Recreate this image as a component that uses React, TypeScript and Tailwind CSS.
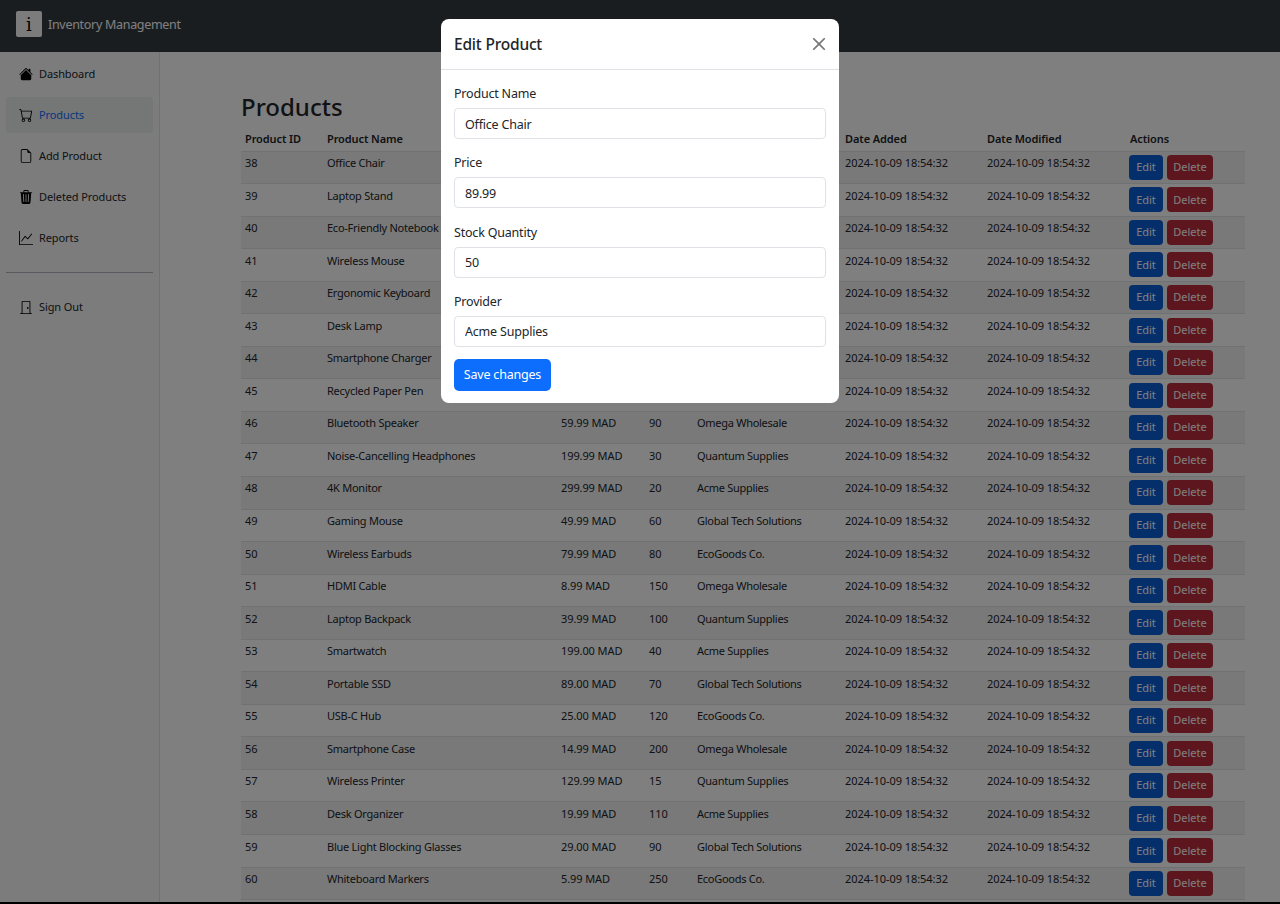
import React from "react";
import { BsHouseFill, BsCart, BsFileEarmark, BsTrash3Fill, BsGraphUp, BsDoorClosed, BsX } from "react-icons/bs";

const rows: [number, string, string, number, string][] = [
  [38, "Office Chair", "89.99", 50, "Acme Supplies"],
  [39, "Laptop Stand", "34.99", 75, "Global Tech Solutions"],
  [40, "Eco-Friendly Notebook", "5.99", 200, "EcoGoods Co."],
  [41, "Wireless Mouse", "19.99", 120, "Omega Wholesale"],
  [42, "Ergonomic Keyboard", "49.99", 60, "Quantum Supplies"],
  [43, "Desk Lamp", "24.99", 80, "Acme Supplies"],
  [44, "Smartphone Charger", "14.99", 150, "Global Tech Solutions"],
  [45, "Recycled Paper Pen", "2.99", 300, "EcoGoods Co."],
  [46, "Bluetooth Speaker", "59.99", 90, "Omega Wholesale"],
  [47, "Noise-Cancelling Headphones", "199.99", 30, "Quantum Supplies"],
  [48, "4K Monitor", "299.99", 20, "Acme Supplies"],
  [49, "Gaming Mouse", "49.99", 60, "Global Tech Solutions"],
  [50, "Wireless Earbuds", "79.99", 80, "EcoGoods Co."],
  [51, "HDMI Cable", "8.99", 150, "Omega Wholesale"],
  [52, "Laptop Backpack", "39.99", 100, "Quantum Supplies"],
  [53, "Smartwatch", "199.00", 40, "Acme Supplies"],
  [54, "Portable SSD", "89.00", 70, "Global Tech Solutions"],
  [55, "USB-C Hub", "25.00", 120, "EcoGoods Co."],
  [56, "Smartphone Case", "14.99", 200, "Omega Wholesale"],
  [57, "Wireless Printer", "129.99", 15, "Quantum Supplies"],
  [58, "Desk Organizer", "19.99", 110, "Acme Supplies"],
  [59, "Blue Light Blocking Glasses", "29.00", 90, "Global Tech Solutions"],
  [60, "Whiteboard Markers", "5.99", 250, "EcoGoods Co."],
];

const nav = [
  { label: "Dashboard", Icon: BsHouseFill },
  { label: "Products", Icon: BsCart, active: true },
  { label: "Add Product", Icon: BsFileEarmark },
  { label: "Deleted Products", Icon: BsTrash3Fill },
  { label: "Reports", Icon: BsGraphUp },
];

const fields = [
  ["Product Name", "Office Chair"],
  ["Price", "89.99"],
  ["Stock Quantity", "50"],
  ["Provider", "Acme Supplies"],
];

function NavLink({ label, Icon, active }: { label: string; Icon: React.ComponentType<{ className?: string }>; active?: boolean }) {
  return (
    <a className={`flex h-9 items-center gap-[6px] rounded-[4px] pl-[13px] ${active ? "bg-black/5 text-[#0d6efd]" : "text-[#212529]"}`}>
      <Icon className="h-[14px] w-[14px] text-black" />
      <span className="pt-px tracking-[-0.1px]">{label}</span>
    </a>
  );
}

export default function App() {
  return (
    <div className="h-[904px] overflow-hidden bg-black font-['Noto_Sans',sans-serif] text-[11px] text-[#212529]">
      <div className="h-[902px] overflow-hidden bg-white">
        <header className="flex h-[52px] items-start bg-[#343a40] pl-4 pt-[11px]">
          <div className="flex h-[26px] w-[26px] items-center justify-center rounded-[2px] bg-[#f8f9fa] font-['DejaVu_Serif',serif] text-[18px] text-black">i</div>
          <span className="ml-[6px] mt-[5px] text-[12.5px] tracking-[-0.3px] text-white">Inventory Management</span>
        </header>
        <div className="flex">
          <aside className="h-[850px] w-[160px] shrink-0 border-r border-[#dee2e6] bg-[#f8f9fa] px-[6px] pt-1">
            <nav className="flex flex-col gap-[5px]">
              {nav.map((n) => (
                <NavLink key={n.label} {...n} />
              ))}
            </nav>
            <hr className="mb-4 mt-[16px] border-t border-[#adb5bd]" />
            <NavLink label="Sign Out" Icon={BsDoorClosed} />
          </aside>
          <main className="flex-1 pl-[81px] pr-[35px] pt-[35px]">
            <h2 className="text-[24px] font-medium leading-[39px] text-[#212529]">Products</h2>
            <table className="w-full table-fixed border-collapse">
              <colgroup>
                <col className="w-[82px]" />
                <col className="w-[234px]" />
                <col className="w-[88px]" />
                <col className="w-[48px]" />
                <col className="w-[148px]" />
                <col className="w-[142px]" />
                <col className="w-[143px]" />
                <col />
              </colgroup>
              <thead>
                <tr className="h-[25px] border-b border-[#dee2e6] text-left">
                  <th className="px-1 pt-[2px] font-semibold tracking-[-0.1px]">Product ID</th>
                  <th className="px-1 pt-[2px] font-semibold tracking-[-0.1px]">Product Name</th>
                  <th className="px-1 pt-[2px] font-semibold tracking-[-0.1px]">Price</th>
                  <th className="px-1 pt-[2px] font-semibold tracking-[-0.1px]">Stock</th>
                  <th className="px-1 pt-[2px] font-semibold tracking-[-0.1px]">Provider</th>
                  <th className="px-1 pt-[2px] font-semibold tracking-[-0.1px]">Date Added</th>
                  <th className="px-1 pt-[2px] font-semibold tracking-[-0.1px]">Date Modified</th>
                  <th className="px-1 pt-[2px] font-semibold tracking-[-0.1px]">Actions</th>
                </tr>
              </thead>
              <tbody>
                {rows.map((r, i) => (
                  <tr key={r[0]} className={`h-[32.55px] border-b border-[#dee2e6] ${i % 2 === 0 ? "bg-black/5" : ""}`}>
                    <td className="truncate px-1 pb-[8px] align-middle">{r[0]}</td>
                    <td className="truncate px-1 pb-[8px] align-middle tracking-[-0.25px]">{r[1]}</td>
                    <td className="truncate px-1 pb-[8px] align-middle tracking-[-0.1px]">{r[2]} MAD</td>
                    <td className="truncate px-1 pb-[8px] align-middle">{r[3]}</td>
                    <td className="truncate px-1 pb-[8px] align-middle tracking-[-0.28px]">{r[4]}</td>
                    <td className="truncate px-1 pb-[8px] align-middle tracking-[-0.05px]">2024-10-09 18:54:32</td>
                    <td className="truncate px-1 pb-[8px] align-middle tracking-[-0.05px]">2024-10-09 18:54:32</td>
                    <td className="px-1 align-middle">
                      <div className="-ml-px flex gap-1">
                        <button className="h-[25px] w-[34px] rounded-[4px] bg-[#0b5ed7] text-white">Edit</button>
                        <button className="h-[25px] w-[46px] rounded-[4px] bg-[#bb2d3b] text-white">Delete</button>
                      </div>
                    </td>
                  </tr>
                ))}
              </tbody>
            </table>
          </main>
        </div>
      </div>

      <div className="fixed inset-x-0 top-0 h-[902px] bg-black/50" />

      <div className="fixed left-[441px] top-[19px] w-[398px] rounded-[8px] bg-white text-[12.5px] tracking-[-0.2px]">
        <div className="flex h-[51px] items-center justify-between border-b border-[#dee2e6] pl-[13px] pr-[6px]">
          <h5 className="pt-px text-[15.5px] font-medium">Edit Product</h5>
          <BsX className="h-[28px] w-[28px] text-[#777]" />
        </div>
        <div className="px-[13px] pt-[13px] pb-3">
          {fields.map(([label, value]) => (
            <div key={label} className="mb-[13.25px]">
              <label className="mb-1 block leading-[21px]">{label}</label>
              <input
                readOnly
                value={value}
                className="block h-[31px] w-full rounded-[4px] border border-[#dee2e6] px-[10px] pt-px text-[#212529]"
              />
            </div>
          ))}
          <button className="-mt-px h-8 w-[97px] rounded-[5px] bg-[#0d6efd] pt-px text-white">Save changes</button>
        </div>
      </div>
    </div>
  );
}
